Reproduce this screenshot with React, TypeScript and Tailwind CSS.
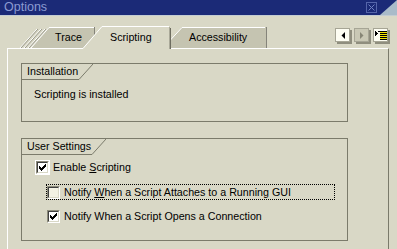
import React from "react";

const LINE = "#7b7b6b";

function CheckMark() {
  return (
    <svg width="7" height="7" viewBox="0 0 7 7" shapeRendering="crispEdges">
      <path
        d="M0 2h1v3h-1zM1 3h1v3h-1zM2 4h1v3h-1zM3 3h1v3h-1zM4 2h1v3h-1zM5 1h1v3h-1zM6 0h1v3h-1z"
        fill="#000"
      />
    </svg>
  );
}

function CheckBox({ checked, ring }: { checked: boolean; ring?: boolean }) {
  return (
    <span
      className={`flex size-[13px] shrink-0 border border-t-[#8c8b7b] border-l-[#8c8b7b] border-r-white border-b-white ${
        ring ? "outline outline-white" : ""
      }`}
    >
      <span
        className={`flex flex-1 items-center justify-center border border-t-[#404040] border-l-[#404040] border-r-[#d9d8c6] border-b-[#d9d8c6] ${
          checked ? "bg-white" : "bg-[#f3f2e4]"
        }`}
      >
        {checked && <CheckMark />}
      </span>
    </span>
  );
}

function Group({
  title,
  labelWidth,
  className,
  children,
}: {
  title: string;
  labelWidth: string;
  className: string;
  children: React.ReactNode;
}) {
  return (
    <div className={`flex w-[327px] flex-col border border-[#7b7b6b] ${className}`}>
      <div className="flex h-[16px]">
        <div className={`flex items-center border-b border-[#7b7b6b] pl-[5px] ${labelWidth}`}>
          {title}
        </div>
        <svg width="14" height="16" viewBox="0 0 14 16">
          <line x1="0" y1="15.5" x2="14" y2="0" stroke={LINE} strokeWidth="1" />
        </svg>
      </div>
      {children}
    </div>
  );
}

function NavButton({ kind }: { kind: "prev" | "next" | "list" }) {
  const disabled = kind === "next";
  return (
    <span
      className={`flex h-[14px] w-[15px] items-center justify-center border border-[#a6a595] shadow-[2px_2px_0_#8f8e7e] ${
        disabled ? "bg-[#c9c8b5]" : "bg-[#fdfdf2]"
      }`}
    >
      {kind === "prev" && (
        <svg width="4" height="7" viewBox="0 0 4 7">
          <path d="M4 0v7L0.5 3.5z" fill="#000" />
        </svg>
      )}
      {kind === "next" && (
        <svg width="4" height="7" viewBox="0 0 4 7">
          <path d="M0 0v7l3.5-3.5z" fill="#878676" />
        </svg>
      )}
      {kind === "list" && (
        <svg width="12" height="11" viewBox="0 0 12 11" shapeRendering="crispEdges">
          <rect x="5" y="1" width="7" height="9" fill="#f5e400" />
          <path d="M0 1h1v5h-1zM1 2h1v3h-1zM2 3h1v1h-1z" fill="#000" />
          <path d="M3 1h9v1h-9zM5 3h7v1h-7zM5 5h7v1h-7zM5 7h7v1h-7zM5 9h7v1h-7z" fill="#000" />
        </svg>
      )}
    </span>
  );
}

export default function App() {
  return (
    <div className="flex h-[249px] w-[397px] flex-col overflow-hidden bg-[#d9d8c6] font-['Liberation_Sans',Arial,sans-serif] text-[10.7px] leading-[13px] text-black">
      {/* title bar */}
      <div className="flex h-[15px] shrink-0 items-center bg-[#1b2a77]">
        <span className="pl-[4px] text-[12.5px] leading-[15px] text-[#8b9bd2]">Options</span>
        <span className="ml-auto flex size-[11px] items-center justify-center border border-[#5565aa]">
          <svg width="7" height="7" viewBox="0 0 7 7">
            <path d="M0.5 0.5l6 6M6.5 0.5l-6 6" stroke="#6f80c2" strokeWidth="1" />
          </svg>
        </span>
        <svg width="17" height="15" viewBox="0 0 17 15" className="ml-[3px]">
          <path d="M0 15L17 0V15z" fill="#a9bbc9" />
        </svg>
      </div>
      <div className="h-[1px] shrink-0 bg-[#c3ccd2]" />

      {/* tab row */}
      <div className="relative z-10 flex h-[32px] shrink-0 items-end pl-[18px] pr-[9px]">
        <div className="relative flex h-[22px] w-[78px] items-center">
          <svg width="78" height="22" viewBox="0 0 78 22" className="absolute inset-0">
            <path d="M2 22L19 3M6 22L23 3M10 22L27 3" stroke="#ffffff" strokeWidth="1" />
            <path d="M3 22L20 3M7 22L24 3M11 22L28 3" stroke="#9a998a" strokeWidth="1" />
            <path d="M13 22L31 1H77V22z" fill="#c5c4b1" />
            <path d="M13 22L31 1.5H76" stroke="#ffffff" strokeWidth="1" fill="none" />
            <path d="M76.5 1V22" stroke="#85847a" strokeWidth="1" />
          </svg>
          <span className="relative pl-[37px]">Trace</span>
        </div>
        <div className="relative z-10 -mb-px ml-[-13px] flex h-[23px] w-[89px] items-center">
          <svg width="89" height="23" viewBox="0 0 89 23" className="absolute inset-0">
            <path d="M0 22L19 0H86L88 2V23H0z" fill="#d9d8c6" />
            <path d="M0 22.5L19 0.5H86" stroke="#ffffff" strokeWidth="1" fill="none" />
            <path d="M87.5 2V23" stroke="#6e6d60" strokeWidth="1" />
            <path d="M86.5 1V23" stroke="#a9a898" strokeWidth="1" />
          </svg>
          <span className="relative pb-[1px] pl-[27px]">Scripting</span>
        </div>
        <div className="relative ml-[-9px] flex h-[22px] w-[104px] items-center">
          <svg width="104" height="22" viewBox="0 0 104 22" className="absolute inset-0">
            <path d="M0 22L19 1H103V22z" fill="#c5c4b1" />
            <path d="M0 22L19 1.5H102" stroke="#ffffff" strokeWidth="1" fill="none" />
            <path d="M103.5 1V22" stroke="#85847a" strokeWidth="1" />
          </svg>
          <span className="relative pl-[26px]">Accessibility</span>
        </div>
        <div className="ml-auto flex gap-[4px] self-start pt-[12px]">
          <NavButton kind="prev" />
          <NavButton kind="next" />
          <NavButton kind="list" />
        </div>
      </div>

      {/* panel */}
      <div className="ml-[7px] flex w-[382px] flex-1 flex-col border-t border-l border-r border-t-white border-l-white border-r-[#7a7a6a] pt-[14px] pl-[13px]">
        <Group title="Installation" labelWidth="w-[57px]" className="h-[59px]">
          <div className="pt-[8px] pl-[12px]">Scripting is installed</div>
        </Group>

        <Group title="User Settings" labelWidth="w-[70px]" className="mt-[16px] h-[103px]">
          <div className="flex flex-col pt-[6px]">
            <label className="flex items-center gap-[4px] pl-[14px]">
              <CheckBox checked ring />
              <span>
                Enable <span className="underline">S</span>cripting
              </span>
            </label>
            <label className="mt-[10px] ml-[24px] flex h-[16px] w-[289px] items-center gap-[4px] border border-dotted border-black">
              <CheckBox checked={false} />
              <span>
                Notify <span className="underline">W</span>hen a Script Attaches to a Running GUI
              </span>
            </label>
            <label className="mt-[8px] ml-[24px] flex h-[16px] items-center gap-[4px] border border-transparent">
              <CheckBox checked />
              <span>Notify When a Script Opens a Connection</span>
            </label>
          </div>
        </Group>
      </div>
    </div>
  );
}
